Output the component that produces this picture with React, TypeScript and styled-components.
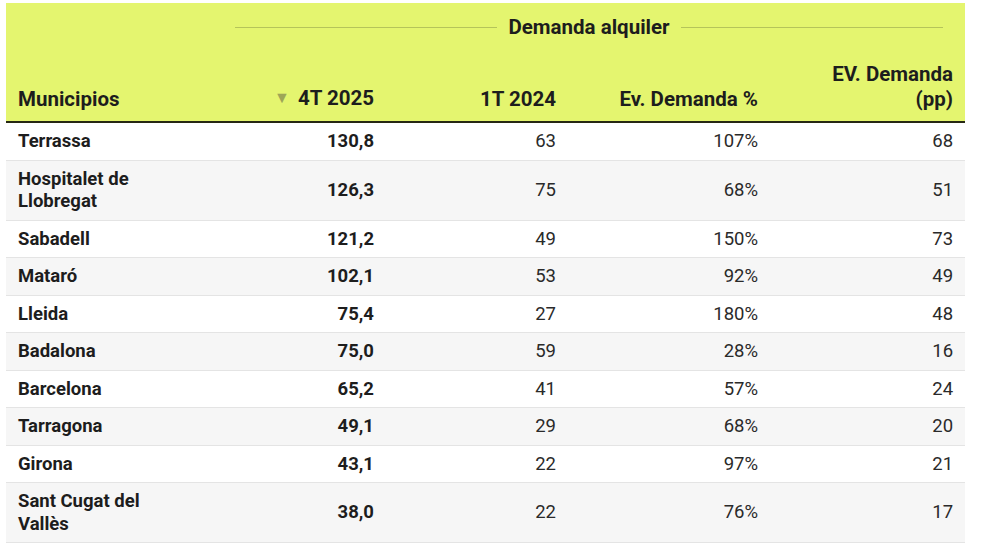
import { styled, createGlobalStyle } from 'styled-components';

const GlobalStyle = createGlobalStyle`
    body {
        margin: 0;
        background: #ffffff;
        font-family: Roboto, "Liberation Sans", sans-serif;
        color: #1d1d1d;
    }
`;

interface Fila {
    municipio: string;
    t4: string;
    t1: string;
    evPct: string;
    evPp: string;
}

const filas: Fila[] = [
    { municipio: 'Terrassa', t4: '130,8', t1: '63', evPct: '107%', evPp: '68' },
    { municipio: 'Hospitalet de Llobregat', t4: '126,3', t1: '75', evPct: '68%', evPp: '51' },
    { municipio: 'Sabadell', t4: '121,2', t1: '49', evPct: '150%', evPp: '73' },
    { municipio: 'Mataró', t4: '102,1', t1: '53', evPct: '92%', evPp: '49' },
    { municipio: 'Lleida', t4: '75,4', t1: '27', evPct: '180%', evPp: '48' },
    { municipio: 'Badalona', t4: '75,0', t1: '59', evPct: '28%', evPp: '16' },
    { municipio: 'Barcelona', t4: '65,2', t1: '41', evPct: '57%', evPp: '24' },
    { municipio: 'Tarragona', t4: '49,1', t1: '29', evPct: '68%', evPp: '20' },
    { municipio: 'Girona', t4: '43,1', t1: '22', evPct: '97%', evPp: '21' },
    { municipio: 'Sant Cugat del Vallès', t4: '38,0', t1: '22', evPct: '76%', evPp: '17' },
];

function App() {
    return (
        <>
            <GlobalStyle />
            <Wrap>
                <Tabla>
                    <colgroup>
                        <col style={{ width: 217 }} />
                        <col style={{ width: 163 }} />
                        <col style={{ width: 182 }} />
                        <col style={{ width: 202 }} />
                        <col style={{ width: 195 }} />
                    </colgroup>
                    <Cabecera>
                        <tr>
                            <th></th>
                            <SpannerCelda colSpan={4}>
                                <Spanner>
                                    <SpannerLinea />
                                    <SpannerTexto>Demanda alquiler</SpannerTexto>
                                    <SpannerLinea />
                                </Spanner>
                            </SpannerCelda>
                        </tr>
                        <tr>
                            <ColTitulo $align="left">Municipios</ColTitulo>
                            <ColTitulo>
                                <Flecha>▼</Flecha>4T 2025
                            </ColTitulo>
                            <ColTitulo>1T 2024</ColTitulo>
                            <ColTitulo>Ev. Demanda %</ColTitulo>
                            <ColTitulo>
                                EV. Demanda
                                <br />
                                (pp)
                            </ColTitulo>
                        </tr>
                    </Cabecera>
                    <tbody>
                        {filas.map((f) => (
                            <Fila key={f.municipio}>
                                <Celda $bold $align="left">
                                    <Nombre>{f.municipio}</Nombre>
                                </Celda>
                                <Celda $bold>{f.t4}</Celda>
                                <Celda>{f.t1}</Celda>
                                <Celda>{f.evPct}</Celda>
                                <Celda>{f.evPp}</Celda>
                            </Fila>
                        ))}
                    </tbody>
                </Tabla>
            </Wrap>
        </>
    );
}

const Wrap = styled.div`
    padding: 3px 0 0 6px;
`;

const Tabla = styled.table`
    width: 959px;
    border-collapse: collapse;
    table-layout: fixed;
    font-size: 18.5px;
`;

const Cabecera = styled.thead`
    background-color: #e4f56f;
    border-bottom: 2px solid #262814;
`;

const SpannerCelda = styled.th`
    padding: 12px 22px 0 12px;
    height: 34px;
    vertical-align: top;
`;

const Spanner = styled.div`
    display: flex;
    align-items: center;
    gap: 11px;
`;

const SpannerLinea = styled.div`
    flex: 1;
    height: 1px;
    background-color: #b5c45a;
`;

const SpannerTexto = styled.span`
    font-size: 20.5px;
    font-weight: 700;
    line-height: 24px;
    color: #1d1d1d;
`;

const ColTitulo = styled.th<{ $align?: 'left' | 'right' }>`
    text-align: ${(p) => p.$align ?? 'right'};
    vertical-align: bottom;
    padding: 8px 12px 9px 12px;
    font-size: 20.5px;
    font-weight: 700;
    line-height: 25px;
    color: #1d1d1d;
    height: 55px;
`;

const Flecha = styled.span`
    color: #9ea557;
    font-size: 16px;
    margin-right: 8px;
    position: relative;
    top: -2px;
`;

const Fila = styled.tr`
    border-bottom: 1px solid #e4e4e4;
    background-color: #ffffff;

    &:nth-child(even) {
        background-color: #f6f6f6;
    }
`;

const Celda = styled.td<{ $bold?: boolean; $align?: 'left' | 'right' }>`
    text-align: ${(p) => p.$align ?? 'right'};
    font-weight: ${(p) => (p.$bold ? 700 : 400)};
    padding: 7px 12px 7px 12px;
    line-height: 22.5px;
    color: ${(p) => (p.$bold ? '#1d1d1d' : '#2a2a2a')};
`;

const Nombre = styled.span`
    display: inline-block;
    max-width: 160px;
`;

export default App;
